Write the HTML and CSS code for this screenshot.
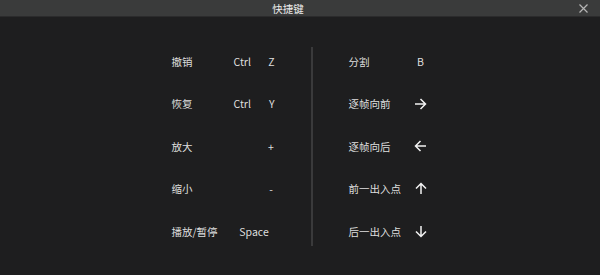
FILE: index.html
```html
<!DOCTYPE html>
<html lang="zh-CN">
<head>
  <meta charset="UTF-8" />
  <title>快捷键</title>
  <link rel="stylesheet" href="styles.css">
</head>
<body>
  <div class="titlebar">
    <span class="title">快捷键</span>
    <span class="close">
      <svg width="9" height="9" viewBox="0 0 9 9"><path d="M0.5 0.5L8.5 8.5M8.5 0.5L0.5 8.5" stroke="#b5b5b5" stroke-width="1.2" /></svg>
    </span>
  </div>

  <div class="content">
    <div class="shortcuts left">
      <div class="row"><span class="label">撤销</span><span class="keys pair"><span>Ctrl</span><span>Z</span></span></div>
      <div class="row"><span class="label">恢复</span><span class="keys pair"><span>Ctrl</span><span>Y</span></span></div>
      <div class="row"><span class="label">放大</span><span class="keys single"><span class="k">+</span></span></div>
      <div class="row"><span class="label">缩小</span><span class="keys single"><span class="k">-</span></span></div>
      <div class="row"><span class="label">播放/暂停</span><span class="keys wide"><span>Space</span></span></div>
    </div>

    <div class="divider"></div>

    <div class="shortcuts right">
      <div class="row"><span class="label">分割</span><span class="key">B</span></div>
      <div class="row"><span class="label">逐帧向前</span>
        <span class="key"><svg width="13" height="12" viewBox="0 0 13 12"><path d="M1 6H11.5M6.5 1L11.5 6L6.5 11" fill="none" stroke="#f2f2f2" stroke-width="1.5" /></svg></span>
      </div>
      <div class="row"><span class="label">逐帧向后</span>
        <span class="key"><svg width="13" height="12" viewBox="0 0 13 12"><path d="M12 6H1.5M6.5 1L1.5 6L6.5 11" fill="none" stroke="#f2f2f2" stroke-width="1.5" /></svg></span>
      </div>
      <div class="row"><span class="label">前一出入点</span>
        <span class="key"><svg width="12" height="13" viewBox="0 0 12 13"><path d="M6 12V1.5M1 6.5L6 1.5L11 6.5" fill="none" stroke="#f2f2f2" stroke-width="1.5" /></svg></span>
      </div>
      <div class="row"><span class="label">后一出入点</span>
        <span class="key"><svg width="12" height="13" viewBox="0 0 12 13"><path d="M6 1V11.5M1 6.5L6 11.5L11 6.5" fill="none" stroke="#f2f2f2" stroke-width="1.5" /></svg></span>
      </div>
    </div>
  </div>
</body>
</html>
```

FILE: styles.css
```css
body {
  margin: 0;
  width: 600px;
  height: 275px;
  background: #1e1e1f;
  color: #dedede;
  font-family: "Noto Sans CJK SC", "Noto Sans", sans-serif;
  font-size: 10.5px;
  overflow: hidden;
}

.titlebar {
  height: 16px;
  background: #3a3b3b;
  border-bottom: 1px solid #2b2b2c;
  display: flex;
  align-items: center;
  justify-content: center;
  position: relative;
}

.title {
  color: #ececec;
  font-size: 10.5px;
  margin-right: 24px;
}

.close {
  position: absolute;
  right: 12px;
  top: 4px;
  display: flex;
}

.content {
  display: flex;
  justify-content: center;
  padding-top: 23px;
}

.shortcuts {
  display: grid;
  grid-auto-rows: 42.5px;
}

.row {
  display: flex;
  align-items: center;
}

.left .label {
  width: 62px;
}

.keys {
  width: 41px;
  display: flex;
}

.keys.pair {
  justify-content: space-between;
}

.keys.single {
  justify-content: flex-end;
}

.keys.single .k {
  width: 7px;
  text-align: center;
}

.keys.wide {
  justify-content: center;
}

.divider {
  width: 2px;
  background: #3a3a3b;
  margin: 7px 36px;
}

.right .label {
  width: 64px;
}

.key {
  width: 16px;
  display: flex;
  justify-content: center;
  align-items: center;
}
```
